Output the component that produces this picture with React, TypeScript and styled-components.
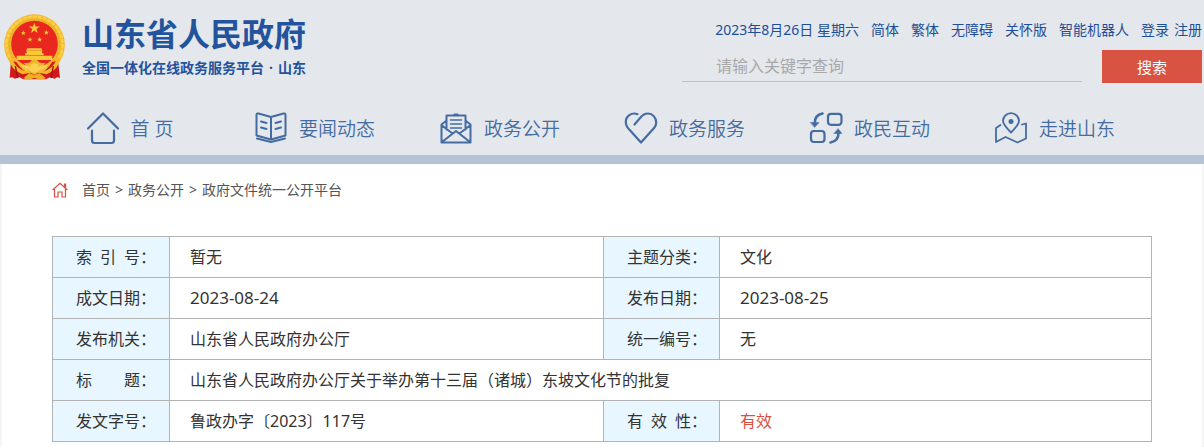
import React from "react";
import styled, { createGlobalStyle } from "styled-components";

const cjk = `"Noto Sans", "Noto Sans CJK SC", sans-serif`;

const GlobalStyle = createGlobalStyle`
  * { box-sizing: border-box; }
  body {
    margin: 0;
    background: #f5f5f5;
    color: #333;
    font-family: ${cjk};
    font-size: 16px;
  }
  a { color: inherit; text-decoration: none; }
  button, input { font-family: inherit; }
`;

const Page = styled.div`
  display: flex;
  flex-direction: column;
  min-height: 100vh;
`;

const Header = styled.header`
  background: #e4e8ed;
  border-bottom: 9px solid #b4c4d4;
`;

const Container = styled.div`
  width: 100%;
  max-width: 1200px;
  margin: 0 auto;
`;

const TopRow = styled(Container)`
  display: flex;
  justify-content: space-between;
  align-items: flex-start;
  height: 101px;
`;

const Logo = styled.a`
  display: flex;
  gap: 16px;
  padding: 14px 0 0 1px;
  color: #24539d;
  font-family: "Noto Sans", "Noto Sans CJK SC", sans-serif;
  font-weight: 700;
  white-space: nowrap;
`;

const LogoText = styled.span`
  display: flex;
  flex-direction: column;
`;

const LogoTitle = styled.span`
  font-size: 32px;
  line-height: 40px;
`;

const LogoSubtitle = styled.span`
  display: flex;
  justify-content: space-between;
  font-size: 14px;
  line-height: 28px;
`;

const Tools = styled.div`
  display: flex;
  flex-direction: column;
  align-items: flex-end;
  gap: 10px;
  padding-top: 20px;
`;

const TopLinks = styled.nav`
  display: flex;
  gap: 12px;
  color: #1f4e96;
  font-size: 14px;
  line-height: 20px;
  white-space: nowrap;
`;

const Account = styled.span`
  display: flex;
  gap: 5px;
`;

const SearchForm = styled.form`
  display: flex;
  gap: 20px;
`;

const SearchInput = styled.input`
  width: 400px;
  height: 32px;
  padding: 0 34px;
  border: 0;
  border-bottom: 1px solid #b4c4d4;
  background: transparent;
  color: #333;
  font-size: 16px;
  outline: none;
  &::placeholder { color: #a9a9a9; }
`;

const SearchButton = styled.button`
  width: 100px;
  height: 33px;
  padding: 0;
  border: 0;
  background: #d95343;
  color: #fff;
  font-size: 15px;
`;

const MainNav = styled(Container).attrs({ as: "nav" })`
  display: grid;
  grid-template-columns: repeat(6, 1fr);
  height: 54px;
  padding: 0 55px 0 35px;
`;

const NavItem = styled.a`
  display: flex;
  justify-content: center;
  align-items: center;
  gap: 11px;
  color: #446ca0;
  font-size: 19px;
  font-weight: 350;
  white-space: nowrap;
`;

const Main = styled(Container).attrs({ as: "main" })`
  flex: 1;
  padding: 16px 50px 0;
  background: #fff;
`;

const Breadcrumb = styled.nav`
  display: flex;
  align-items: center;
  gap: 5px;
  color: #555;
  font-size: 14px;
  line-height: 20px;
`;

const CrumbIcon = styled.svg`
  margin-right: 9px;
`;

const InfoTable = styled.table`
  width: 100%;
  margin-top: 36px;
  border-collapse: collapse;
  table-layout: fixed;
`;

const LabelCell = styled.th`
  height: 41px;
  padding: 0 0 0 23px;
  border: 1px solid #b3b3b3;
  background: #e8f7ff;
  font-weight: 400;
  line-height: 24px;
  text-align: left;
  white-space: nowrap;
`;

const LabelText = styled.span`
  display: inline-block;
  width: 64px;
  text-align: justify;
  text-align-last: justify;
`;

const ValueCell = styled.td<{ $active?: boolean }>`
  padding: 0 20px;
  border: 1px solid #b3b3b3;
  color: ${(p) => (p.$active ? "#d95040" : "#333")};
  line-height: 24px;
`;

const DateText = styled.time`
  font-size: 17px;
`;

const star = (cx: number, cy: number, r: number) =>
  Array.from({ length: 10 }, (_, i) => {
    const a = (Math.PI / 5) * i - Math.PI / 2;
    const d = i % 2 ? r * 0.4 : r;
    return `${(cx + d * Math.cos(a)).toFixed(1)},${(cy + d * Math.sin(a)).toFixed(1)}`;
  }).join(" ");

const Emblem = () => (
  <svg width="63" height="66" viewBox="9 12 189 198" aria-hidden="true">
    <circle cx="103.500" cy="104" r="91" fill="#f3b72b" />
    <circle cx="103.500" cy="104" r="84" fill="none" stroke="#fad046" strokeWidth="8" strokeDasharray="12 3" />
    <circle cx="103.500" cy="104" r="75" fill="none" stroke="#e5a622" strokeWidth="3" strokeDasharray="6 6" />
    <circle cx="103.500" cy="102" r="70" fill="#e8281f" />
    <g fill="#f9c93a">
      <polygon points={star(103, 55, 17)} />
      <polygon points={star(70, 69, 8)} />
      <polygon points={star(139, 68, 8)} />
      <polygon points={star(90, 89, 8)} />
      <polygon points={star(119, 89, 8)} />
      <path d="M82 115h42l4 7h-50zM80 123h46v7h5v6H75v-6h5zM50 137h107v13H50z" />
    </g>
    <path d="M33 152L49 156Q66 182 82 186L124 186Q140 182 157 156L174 152L180 204Q171 198 164 206L150 202L138 208H70L58 202L44 206Q37 198 29 204z" fill="#d0191a" />
    <path d="M38 150Q50 178 78 184L90 176L70 160L88 158Q96 148 103 148Q110 148 119 158L137 160L117 176L130 184Q157 178 169 150L182 140Q178 178 140 193L114 188L103 194L92 188L67 193Q30 178 25 140z" fill="#f3b72b" />
    <path d="M62 166Q78 162 90 170Q92 160 103 160Q114 160 117 170Q129 162 145 166Q134 178 119 180Q112 188 103 188Q94 188 88 180Q73 178 62 166z" fill="#fbd050" />
    <path d="M70 205l18-16 15 6 15-6 20 16-20 4-15-6-15 6z" fill="#efad27" />
    <path d="M46 168l7 36M160 168l-7 36" fill="none" stroke="#a80f12" strokeWidth="4" />
  </svg>
);

const NavIcon = ({ children }: { children: React.ReactNode }) => (
  <svg width="34" height="34" viewBox="0 0 34 34" fill="none" stroke="#446ca0" strokeWidth="2.200" strokeLinecap="round" strokeLinejoin="round" aria-hidden="true">
    {children}
  </svg>
);

const icons = {
  home: (
    <NavIcon>
      <path d="M2 17.500L17 2.500L32 17.500M6 19.500V29.500Q6 32 8.500 32H25.500Q28 32 28 29.500V19.500" />
    </NavIcon>
  ),
  book: (
    <NavIcon>
      <path d="M17 6L4.500 2.500Q2.500 2 2.500 4V24.500L17 28.500L31.500 24.500V4Q31.500 2 29.500 2.500L17 6V28M3 27.500L17 31L31 27.500" strokeWidth="2" />
      <path d="M7 10.500L12.500 12M7 16.500L12.500 18M27 10.500L21.500 12M27 16.500L21.500 18" strokeWidth="2" />
    </NavIcon>
  ),
  mail: (
    <NavIcon>
      <path d="M7.500 18.500V4.500H26.500V18.500M2.500 13.500V31.500H31.500V13.500M2.500 13.500L7 10M31.500 13.500L27 10M3 14.500L13.500 22.500M31 14.500L20.500 22.500M3 31L17 20L31 31" strokeWidth="2" />
      <path d="M11.500 9H22.500M11.500 13H22.500M11.500 17H22.500" strokeWidth="1.600" />
      <path d="M15.500 3.500H18.500" />
    </NavIcon>
  ),
  heart: (
    <NavIcon>
      <path d="M13.500 3.200C7.500 0.800 1.500 5.500 1.800 11.500C2 15 4 17.500 6.200 19.500L17 31.500L27.800 19.500C30.500 17 32.200 14.500 32.200 11.500C32.200 6.500 28.500 2.500 24 2.500C20.500 2.500 18.500 4 16.500 6.500L10.500 13.500" />
    </NavIcon>
  ),
  exchange: (
    <NavIcon>
      <rect x="19" y="2.800" width="13.500" height="11" rx="3" />
      <rect x="2" y="20" width="13.500" height="11" rx="3" />
      <path d="M13.500 2.500C8 3.500 5.800 7 5.800 12M21.500 31.500C27 30.500 29.500 27 29.500 22" strokeWidth="2.600" />
      <path d="M1.500 11.500L10 11.500L5.800 16.200ZM25 22.500L33 22.500L29.200 17.800Z" fill="#446ca0" strokeWidth="0.500" />
    </NavIcon>
  ),
  map: (
    <NavIcon>
      <path d="M17 21.500C12.500 17 9 13.500 9 10A8 7.800 0 0 1 25 10C25 13.500 21.500 17 17 21.500ZM6.500 14L2 17V31L11.500 26L23.500 31.500L32 27.500V12.500L28 13.500" strokeWidth="1.800" />
      <circle cx="17" cy="10.500" r="2.500" fill="#446ca0" stroke="none" />
    </NavIcon>
  ),
};

const navItems: { label: string; icon: keyof typeof icons }[] = [
  { label: "首 页", icon: "home" },
  { label: "要闻动态", icon: "book" },
  { label: "政务公开", icon: "mail" },
  { label: "政务服务", icon: "heart" },
  { label: "政民互动", icon: "exchange" },
  { label: "走进山东", icon: "map" },
];

const Label = ({ children }: { children: string }) => (
  <LabelCell scope="row">
    <LabelText>{children}</LabelText>：
  </LabelCell>
);

export default function App() {
  return (
    <Page lang="zh-CN">
      <GlobalStyle />
      <Header>
        <TopRow>
          <Logo href="#">
            <Emblem />
            <LogoText>
              <LogoTitle>山东省人民政府</LogoTitle>
              <LogoSubtitle>
                <span>全国一体化在线政务服务平台</span>
                <span>·</span>
                <span>山东</span>
              </LogoSubtitle>
            </LogoText>
          </Logo>
          <Tools>
            <TopLinks>
              <span>2023年8月26日 星期六</span>
              {["简体", "繁体", "无障碍", "关怀版", "智能机器人"].map((t) => (
                <a href="#" key={t}>{t}</a>
              ))}
              <Account>
                <a href="#">登录</a>
                <a href="#">注册</a>
              </Account>
            </TopLinks>
            <SearchForm onSubmit={(e) => e.preventDefault()}>
              <SearchInput type="text" aria-label="搜索" placeholder="请输入关键字查询" />
              <SearchButton type="submit">搜索</SearchButton>
            </SearchForm>
          </Tools>
        </TopRow>
        <MainNav>
          {navItems.map((n) => (
            <NavItem href="#" key={n.label}>
              {icons[n.icon]}
              {n.label}
            </NavItem>
          ))}
        </MainNav>
      </Header>
      <Main>
        <Breadcrumb>
          <CrumbIcon width="16" height="16" viewBox="0 0 16 16" fill="none" stroke="#d95040" strokeWidth="1.200" aria-hidden="true">
            <path d="M0.600 8L8 1.200L15.400 8M2.500 7V15H6V10H10V15H13.500V7M12.500 5V2H13.500V6" />
          </CrumbIcon>
          <a href="#">首页</a>
          <span>&gt;</span>
          <a href="#">政务公开</a>
          <span>&gt;</span>
          <a href="#">政府文件统一公开平台</a>
        </Breadcrumb>
        <InfoTable>
          <colgroup>
            <col width="117" />
            <col />
            <col width="116" />
            <col width="432" />
          </colgroup>
          <tbody>
            <tr>
              <Label>索 引 号</Label>
              <ValueCell>暂无</ValueCell>
              <Label>主题分类</Label>
              <ValueCell>文化</ValueCell>
            </tr>
            <tr>
              <Label>成文日期</Label>
              <ValueCell><DateText>2023-08-24</DateText></ValueCell>
              <Label>发布日期</Label>
              <ValueCell><DateText>2023-08-25</DateText></ValueCell>
            </tr>
            <tr>
              <Label>发布机关</Label>
              <ValueCell>山东省人民政府办公厅</ValueCell>
              <Label>统一编号</Label>
              <ValueCell>无</ValueCell>
            </tr>
            <tr>
              <Label>标 题</Label>
              <ValueCell colSpan={3}>山东省人民政府办公厅关于举办第十三届（诸城）东坡文化节的批复</ValueCell>
            </tr>
            <tr>
              <Label>发文字号</Label>
              <ValueCell>鲁政办字〔2023〕117号</ValueCell>
              <Label>有 效 性</Label>
              <ValueCell $active>有效</ValueCell>
            </tr>
          </tbody>
        </InfoTable>
      </Main>
    </Page>
  );
}
